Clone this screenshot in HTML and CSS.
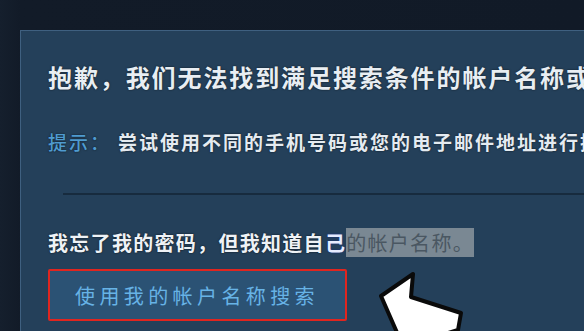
FILE: index.html
```html
<!DOCTYPE html>
<html lang="zh-CN">
<head>
<meta charset="utf-8">
<title>帐户名称</title>
<link rel="stylesheet" href="styles.css">
</head>
<body>
<div class="page">
  <div class="panel">
    <h1 class="title">抱歉，我们无法找到满足搜索条件的帐户名称或电子邮件地址。</h1>
    <p class="hint"><span class="hint-label">提示：</span>尝试使用不同的手机号码或您的电子邮件地址进行搜索。</p>
    <div class="divider"></div>
    <p class="known">我忘了我的密码，但我知道自<span class="sel">己</span><span class="mark">的帐户名称。</span></p>
    <button class="search-btn" type="button">使用我的帐户名称搜索</button>
  </div>
</div>
<svg class="arrow" width="584" height="331" viewBox="0 0 584 331" aria-hidden="true">
  <polygon points="381,296 413,274 411,297 461,313 458,330 425,340 402,344" fill="#ffffff" stroke="#0a0a0a" stroke-width="4" stroke-linejoin="round"/>
</svg>
</body>
</html>
```

FILE: styles.css
```css
html, body {
  margin: 0;
  padding: 0;
  width: 584px;
  height: 331px;
  overflow: hidden;
  background: #111a27;
  font-family: "Noto Sans CJK SC", "Noto Sans", sans-serif;
}

.page {
  position: relative;
  height: 331px;
  padding: 30px 0 0 20px;
  box-sizing: border-box;
  background: linear-gradient(90deg, #151f2d 0, #121b28 20px, #111a27 100%);
}

.panel {
  height: 301px;
  box-sizing: border-box;
  background: #24405a;
  border: 1px solid #3f6080;
  border-right: none;
  border-bottom: none;
  padding: 29px 0 0 27px;
  white-space: nowrap;
  overflow: hidden;
}

.title {
  margin: 0;
  font-size: 24px;
  line-height: 34px;
  font-weight: 700;
  letter-spacing: 1.9px;
  color: #e8eef3;
  text-shadow: 0 0 2px rgba(0, 0, 0, 0.7);
}

.hint {
  margin: 34px 0 0 0;
  font-size: 19px;
  line-height: 28px;
  font-weight: 700;
  letter-spacing: 2px;
  color: #e4ebf1;
  text-shadow: 0 0 2px rgba(0, 0, 0, 0.7);
}

.hint-label {
  color: #4f9bd0;
  font-weight: 500;
  margin-right: 7px;
}

.divider {
  margin: 37px 0 0 15px;
  height: 2px;
  background: #172b3e;
}

.known {
  margin: 33px 0 0 0;
  font-size: 20px;
  line-height: 30px;
  font-weight: 700;
  letter-spacing: 1.3px;
  color: #eef2f6;
  text-shadow: 0 0 2px rgba(0, 0, 0, 0.8);
}

.sel {
  color: #e6ecff;
  text-shadow: 0 0 2px #1a2f8a;
}

.mark {
  background: #7a8893;
  color: #4a5762;
  font-weight: 400;
  text-shadow: none;
}

.search-btn {
  display: block;
  margin-top: 11px;
  width: 299px;
  height: 52px;
  box-sizing: border-box;
  border: 2px solid #e0251f;
  border-radius: 2px;
  background: #2b5274;
  color: #67b3e6;
  font-family: "Noto Sans CJK SC", "Noto Sans", sans-serif;
  font-size: 20px;
  letter-spacing: 4.4px;
  text-align: left;
  padding: 0 0 0 25px;
}

.arrow {
  position: absolute;
  top: 0;
  left: 0;
  pointer-events: none;
}
```
